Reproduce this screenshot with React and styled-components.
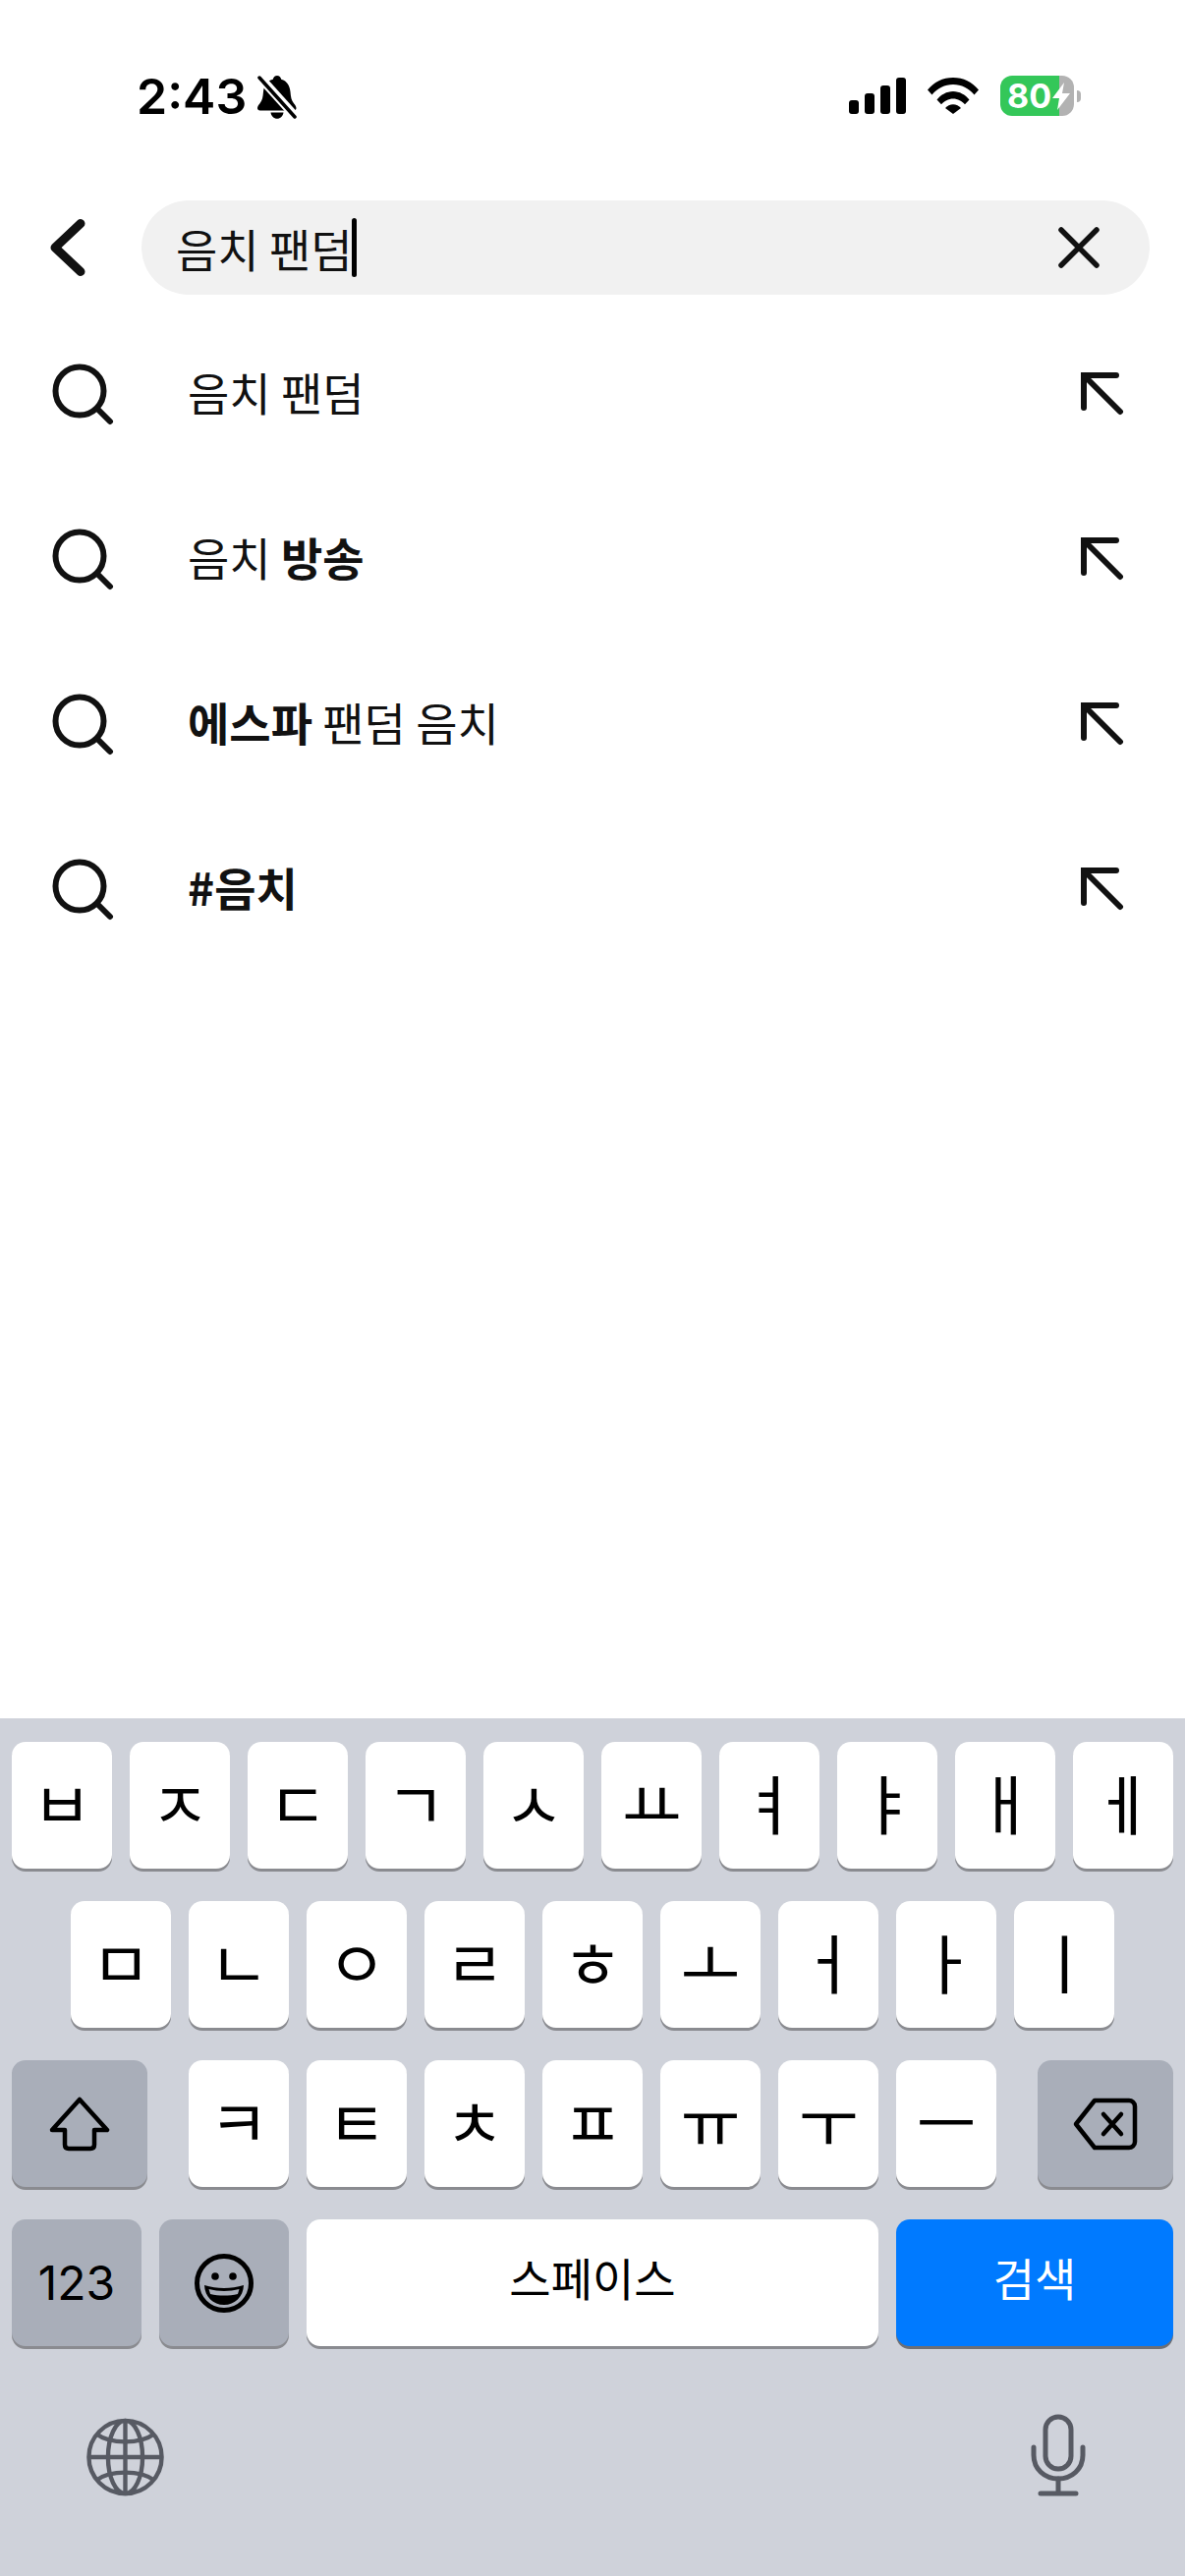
import React from 'react';
import styled, { createGlobalStyle } from 'styled-components';

const KR = `'Noto Sans CJK KR', 'Noto Sans', sans-serif`;

const GlobalStyle = createGlobalStyle`
  html, body { margin: 0; padding: 0; background: #fff; }
  * { box-sizing: border-box; }
`;

const Screen = styled.div`
  width: 1206px;
  height: 2622px;
  display: flex;
  flex-direction: column;
  overflow: hidden;
  background: #fff;
  color: #111;
  font-family: ${KR};
`;

// status bar
const StatusBar = styled.div`
  height: 204px;
  padding: 77px 106px 0 139px;
  display: flex;
  justify-content: space-between;
  align-items: flex-start;
`;

const StatusLeft = styled.div`
  display: flex;
  align-items: center;
  gap: 11px;
  height: 43px;
`;

const Clock = styled.span`
  font: 600 50px/41px Inter, sans-serif;
  color: #000;
`;

const StatusRight = styled.div`
  display: flex;
  align-items: center;
  height: 41px;
`;

const Battery = styled.div`
  width: 75px;
  height: 41px;
  margin-left: 22px;
  border-radius: 12px;
  background: linear-gradient(to right, #34c759 80%, #b2b2b2 80%);
  display: flex;
  align-items: center;
  padding-left: 7px;
  position: relative;
  color: #fff;
  font: 700 34px/41px Inter, sans-serif;
`;

const BatteryBolt = styled.svg`
  position: absolute;
  left: 53px;
  top: 7px;
`;

const BatteryNub = styled.div`
  width: 4px;
  height: 12px;
  margin-left: 3px;
  border-radius: 0 6px 6px 0;
  background: #b2b2b2;
`;

// search
const SearchHeader = styled.div`
  height: 96px;
  padding: 0 36px 0 51px;
  display: flex;
  align-items: center;
  flex-shrink: 0;
`;

const BackButton = styled.svg`
  margin-right: 57px;
  flex-shrink: 0;
`;

const SearchPill = styled.div`
  flex: 1;
  height: 96px;
  border-radius: 48px;
  background: #f1f1f1;
  padding: 0 51px 0 35px;
  display: flex;
  align-items: center;
  justify-content: space-between;
`;

const SearchValue = styled.div`
  display: flex;
  align-items: center;
  font-size: 46px;
  line-height: 60px;
  color: #111;
`;

const Caret = styled.span`
  width: 5px;
  height: 60px;
  margin-left: -1px;
  border-radius: 3px;
  background: #000;
`;

const Suggestions = styled.div`
  flex: 1;
  padding-top: 17px;
`;

const SuggestionRow = styled.div`
  height: 168px;
  padding: 0 62px 0 52px;
  display: flex;
  align-items: center;
`;

const SuggestionText = styled.div`
  flex: 1;
  margin-left: 75px;
  padding-bottom: 6px;
  font-size: 46px;
  color: #111;
  white-space: pre;
  b { font-weight: 700; }
`;

// keyboard
const Keyboard = styled.div`
  height: 873px;
  flex-shrink: 0;
  background: #cfd2da;
  padding: 24px 12px 0;
  display: flex;
  flex-direction: column;
`;

const KeyRow = styled.div`
  display: flex;
  justify-content: space-between;
  gap: 18px;
  height: 129px;
  margin-bottom: 33px;
`;

const KeyGroup = styled.div`
  display: flex;
  gap: 18px;
  margin: 0 auto;
`;

const Key = styled.div`
  width: ${(p) => p.$w || 102}px;
  height: 129px;
  border-radius: 14px;
  background: ${(p) => (p.$variant === 'fn' ? '#a9aeb9' : p.$variant === 'go' ? '#007aff' : '#fff')};
  color: ${(p) => (p.$variant === 'go' ? '#fff' : '#000')};
  box-shadow: 0 3px 0 ${(p) => (p.$variant === 'go' ? '#6d6f75' : '#8a8b90')};
  display: flex;
  align-items: center;
  justify-content: center;
  line-height: 1;
  flex-shrink: 0;
`;

const LetterKey = styled(Key)`
  font-size: 66px;
  padding-bottom: 9px;
`;

const KeyLabel = styled.span`
  font-size: 46px;
  line-height: 1;
  padding-bottom: 13px;
`;

const NumLabel = styled.span`
  font: 400 48px/1 Inter, sans-serif;
`;

const BottomBar = styled.div`
  height: 84px;
  margin-top: 36px;
  padding: 0 89px 0 75px;
  display: flex;
  justify-content: space-between;
  align-items: flex-end;
`;

const SearchIcon = () => (
  <svg width="64" height="64" viewBox="0 0 64 64" fill="none" stroke="#111" strokeWidth="6" strokeLinecap="round">
    <circle cx="29" cy="29" r="24.5" />
    <path d="M47 47 L60 60" />
  </svg>
);

const ArrowIcon = () => (
  <svg width="44" height="44" viewBox="0 0 44 44" fill="none" stroke="#111" strokeWidth="6" strokeLinecap="round" strokeLinejoin="miter">
    <path d="M3 36 V3 H36" />
    <path d="M3 3 L40 40" />
  </svg>
);

const BellOff = () => (
  <svg width="40" height="44" viewBox="0 0 40 44">
    <path d="M20 0c2.200 0 3.800 1.600 4.200 3.700 6 1.800 8.800 6.500 9.300 12.800.4 5.300 1 8.500 3.500 11.700 1.500 2 2.500 3.200 2.500 4.800 0 1.300-1 2.500-2.700 2.500H2.700C1 35.500 0 34.300 0 33c0-1.600 1-2.800 2.500-4.800 2.500-3.200 3.100-6.400 3.500-11.700.5-6.300 3.300-11 9.800-12.800C16.200 1.600 17.800 0 20 0z" fill="#000" />
    <path d="M13.500 37.500h13c-.4 3.600-3.200 6.300-6.500 6.300s-6.100-2.700-6.500-6.300z" fill="#000" />
    <path d="M2 1 39 42" stroke="#fff" strokeWidth="9" />
    <path d="M2 2 38 42" stroke="#000" strokeWidth="3.500" strokeLinecap="round" />
  </svg>
);

const Signal = () => (
  <svg width="58" height="37" viewBox="0 0 58 37" fill="#000">
    <rect x="0" y="23" width="10" height="14" rx="3" />
    <rect x="16" y="16" width="10" height="21" rx="3" />
    <rect x="32" y="8" width="10" height="29" rx="3" />
    <rect x="48" y="0" width="10" height="37" rx="3" />
  </svg>
);

const Wifi = () => (
  <svg width="52" height="37" viewBox="0 0 52 37" style={{ marginLeft: 22 }}>
    <path d="M0 12.500C6.500 4.500 15.500 0 26 0s19.500 4.500 26 12.500l-4.500 5C41.800 10.800 34.500 7 26 7S10.200 10.800 4.500 17.500z" fill="#000" />
    <path d="M9.500 22.500C13.500 17.500 19.500 14 26 14s12.500 3.500 16.500 8.500L38 27.300C35 24 30.800 21.500 26 21.500S17 24 14 27.300z" fill="#000" />
    <path d="M18 31c2-2.300 4.900-3.700 8-3.700s6 1.400 8 3.700l-8 6z" fill="#000" />
  </svg>
);

const BackIcon = () => (
  <BackButton width="36" height="58" viewBox="0 0 36 58" fill="none" stroke="#111" strokeWidth="9" strokeLinecap="round" strokeLinejoin="round">
    <path d="M31 4.500 5 29 31 53.500" />
  </BackButton>
);

const ClearIcon = () => (
  <svg width="42" height="42" viewBox="0 0 42 42" stroke="#111" strokeWidth="5.500" strokeLinecap="round">
    <path d="M3 3 39 39M39 3 3 39" />
  </svg>
);

const ShiftIcon = () => (
  <svg width="64" height="56" viewBox="0 0 64 56" fill="none" stroke="#000" strokeWidth="4.500" strokeLinejoin="round">
    <path d="M32 3 60 34H47V49c0 2.500-1.500 4-4 4H21c-2.500 0-4-1.500-4-4V34H4z" />
  </svg>
);

const DeleteIcon = () => (
  <svg width="66" height="54" viewBox="0 0 66 54" fill="none" stroke="#000" strokeWidth="4.500" strokeLinecap="round" strokeLinejoin="round">
    <path d="M22 3H57c3 0 6 2.500 6 6V45c0 3.500-3 6-6 6H22L3 27z" />
    <path d="M31 17 49 37M49 17 31 37" />
  </svg>
);

const EmojiIcon = () => (
  <svg width="60" height="60" viewBox="0 0 60 60" fill="none">
    <circle cx="30" cy="30" r="27.500" stroke="#000" strokeWidth="5" />
    <circle cx="21" cy="23" r="3.800" fill="#000" />
    <circle cx="39" cy="23" r="3.800" fill="#000" />
    <path d="M10 32c13 4 27 4 40 0-.5 12-9 20-20 20S10.500 44 10 32z" fill="#000" />
    <path d="M14.500 36c10 2.500 21 2.500 31 0l-1.500 5c-9 2-19 2-28 0z" fill="#a9aeb9" />
  </svg>
);

const GlobeIcon = () => (
  <svg width="81" height="80" viewBox="0 0 82 82" fill="none" stroke="#575a63" strokeWidth="4.500">
    <circle cx="41" cy="41" r="38" />
    <ellipse cx="41" cy="41" rx="18" ry="38" />
    <path d="M41 3V79M3 41H79" />
    <path d="M11 17c8 6 18 8 30 8s22-2 30-8" />
    <path d="M11 65c8-6 18-8 30-8s22 2 30 8" />
  </svg>
);

const MicIcon = () => (
  <svg width="56" height="84" viewBox="0 0 56 84" fill="none" stroke="#575a63" strokeWidth="5" strokeLinecap="round">
    <rect x="15" y="3" width="26" height="53" rx="13" />
    <path d="M3 34V42C3 56 14 66 28 66S53 56 53 42V34" />
    <path d="M28 66V81M10 81H46" />
  </svg>
);

const suggestions = [
  <>음치 팬덤</>,
  <>음치 <b>방송</b></>,
  <><b>에스파</b> 팬덤 음치</>,
  <b>#음치</b>,
];

const rowOne = ['ㅂ', 'ㅈ', 'ㄷ', 'ㄱ', 'ㅅ', 'ㅛ', 'ㅕ', 'ㅑ', 'ㅐ', 'ㅔ'];
const rowTwo = ['ㅁ', 'ㄴ', 'ㅇ', 'ㄹ', 'ㅎ', 'ㅗ', 'ㅓ', 'ㅏ', 'ㅣ'];
const rowThree = ['ㅋ', 'ㅌ', 'ㅊ', 'ㅍ', 'ㅠ', 'ㅜ', 'ㅡ'];

export default function App() {
  return (
    <Screen>
      <GlobalStyle />
      <StatusBar>
        <StatusLeft>
          <Clock>2:43</Clock>
          <BellOff />
        </StatusLeft>
        <StatusRight>
          <Signal />
          <Wifi />
          <Battery>
            80
            <BatteryBolt width="18" height="28" viewBox="0 0 18 28" fill="#fff">
              <path d="M12 0 0 16h7L5 28 18 11h-8z" />
            </BatteryBolt>
          </Battery>
          <BatteryNub />
        </StatusRight>
      </StatusBar>

      <SearchHeader>
        <BackIcon />
        <SearchPill>
          <SearchValue>
            음치 팬덤
            <Caret />
          </SearchValue>
          <ClearIcon />
        </SearchPill>
      </SearchHeader>

      <Suggestions>
        {suggestions.map((s, i) => (
          <SuggestionRow key={i}>
            <SearchIcon />
            <SuggestionText>{s}</SuggestionText>
            <ArrowIcon />
          </SuggestionRow>
        ))}
      </Suggestions>

      <Keyboard>
        <KeyRow>
          {rowOne.map((k) => <LetterKey key={k}>{k}</LetterKey>)}
        </KeyRow>
        <KeyRow>
          <KeyGroup>
            {rowTwo.map((k) => <LetterKey key={k}>{k}</LetterKey>)}
          </KeyGroup>
        </KeyRow>
        <KeyRow>
          <Key $w={138} $variant="fn"><ShiftIcon /></Key>
          <KeyGroup>
            {rowThree.map((k) => <LetterKey key={k}>{k}</LetterKey>)}
          </KeyGroup>
          <Key $w={138} $variant="fn"><DeleteIcon /></Key>
        </KeyRow>
        <KeyRow>
          <Key $w={132} $variant="fn"><NumLabel>123</NumLabel></Key>
          <Key $w={132} $variant="fn"><EmojiIcon /></Key>
          <Key $w={582}><KeyLabel>스페이스</KeyLabel></Key>
          <Key $w={282} $variant="go"><KeyLabel>검색</KeyLabel></Key>
        </KeyRow>
        <BottomBar>
          <GlobeIcon />
          <MicIcon />
        </BottomBar>
      </Keyboard>
    </Screen>
  );
}
